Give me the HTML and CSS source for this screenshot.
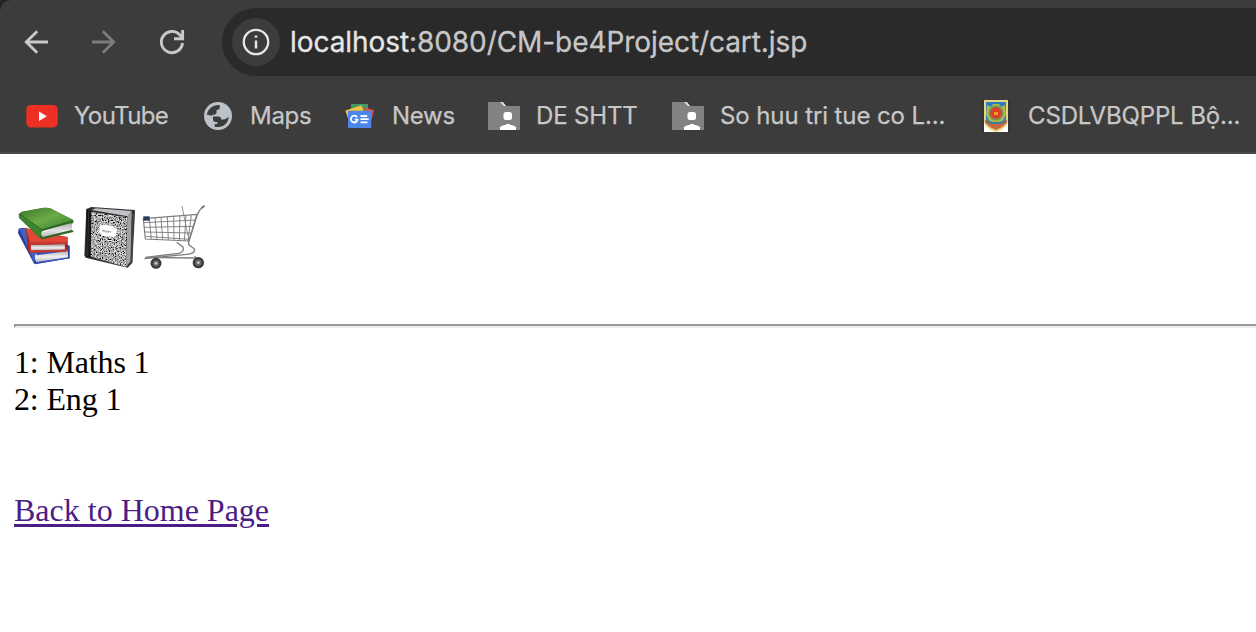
FILE: index.html
```html
<!DOCTYPE html>
<html lang="en">
<head>
<meta charset="utf-8">
<title>Cart</title>
<link rel="stylesheet" href="styles.css">
</head>
<body>
<header class="browser">
  <nav class="toolbar">
    <svg class="nav-icon" viewBox="0 0 28 28"><path d="M26 14H4M15.200 3.200L4.200 14l11 10.800" fill="none" stroke="#c9c9c9" stroke-width="2.800"/></svg>
    <svg class="nav-icon" viewBox="0 0 28 28"><path d="M2 14h22M12.800 3.200L23.800 14l-11 10.800" fill="none" stroke="#7c7c7c" stroke-width="2.800"/></svg>
    <svg class="nav-icon" viewBox="0 0 28 28"><path d="M24.500 15A10.600 10.600 0 1 1 21.800 6.900L24.600 9.800M24.600 2v8.800H16" fill="none" stroke="#c9c9c9" stroke-width="2.900"/></svg>
    <div class="address">
      <span class="site-info"><svg viewBox="0 0 28 28"><circle cx="14" cy="14" r="12.200" fill="none" stroke="#e6e6e6" stroke-width="2.300"/><path d="M14 12.600v8M14 7.400v2.400" stroke="#e6e6e6" stroke-width="2.500"/></svg></span>
      <span class="url"><b>localhost</b>:8080/CM-be4Project/cart.jsp</span>
    </div>
  </nav>
  <div class="bookmarks">
    <a class="bookmark"><svg viewBox="0 0 32 32"><rect x=".3" y="5" width="31.400" height="22.400" rx="4.500" fill="#ee3024"/><path d="M13 11.500v9.500l7.800-4.800z" fill="#fff"/></svg><span class="t-youtube">YouTube</span></a>
    <a class="bookmark"><svg viewBox="0 0 32 32"><circle cx="16" cy="16" r="14" fill="#bdc1c8"/><path d="M17.800 5v2.200c0 1.800-1.300 2.800-3.300 2.800v2.600c0 1.200-.9 2.200-2.500 2.200h-1.800v1.700h6.300c1.800 0 2.600 1.100 2.600 3h2.200c2.500 0 3.800-1.200 5.400-2.900.2 4.900-4 10.200-9.500 10.400h-4.700v-2.900h2.300V22h-3.300c-1.500 0-2.600-1.300-2.600-3.100L4.900 15C5.400 9.400 10.400 4.700 17.800 5z" fill="#3c3c3c"/><path d="M4.500 14.500l6.500 1.600v3.400c0 1.800 1.200 2.400 2.700 2.400h1.600v2H12.500V28C6 26 3 20 4.500 14.500z" fill="#bdc1c8"/></svg><span class="t-maps">Maps</span></a>
    <a class="bookmark"><svg viewBox="0 0 32 32"><path d="M7 4h17v12H7z" fill="#3f9b62"/><path d="M20 7l10 3.200L26 25z" fill="#df5145"/><path d="M1.300 10.500L17.500 5.200 22 18 6 24z" fill="#f5c244"/><rect x="4" y="10.800" width="23.200" height="17.200" rx="1" fill="#4d86ea"/><path d="M13 17.100a3.400 3.400 0 1 0 .6 2.600H10.800M16.500 16h6.700M16.500 19.200h8.200M16.500 22.400h7" fill="none" stroke="#fff" stroke-width="1.800"/></svg><span class="t-news">News</span></a>
    <a class="bookmark"><svg viewBox="0 0 32 32"><path d="M0 2h14l4 4h14v24H0z" fill="#828282"/><path d="M12 2h3l3 4h-2l-2-2z" fill="#e4e4e4"/><rect x="15.500" y="12" width="8.500" height="8" rx="2.500" fill="#fff"/><path d="M12 30v-3l4-2h2v-1h4v1h2l4 2v3z" fill="#fff"/></svg><span class="t-shtt">DE SHTT</span></a>
    <a class="bookmark"><svg viewBox="0 0 32 32"><path d="M0 2h14l4 4h14v24H0z" fill="#828282"/><path d="M12 2h3l3 4h-2l-2-2z" fill="#e4e4e4"/><rect x="15.500" y="12" width="8.500" height="8" rx="2.500" fill="#fff"/><path d="M12 30v-3l4-2h2v-1h4v1h2l4 2v3z" fill="#fff"/></svg><span class="t-sohuu">So huu tri tue co L...</span></a>
    <a class="bookmark"><svg viewBox="0 0 32 32"><path d="M2 0h2v32H2zM28 0h2v32h-2z" fill="#343434"/><path d="M4 0h24v32H4z" fill="#fff"/><path d="M4 0h24v22l-2 4-5 4-5 2-5-2-5-4-2-4z" fill="#e2d681"/><path d="M6 2h20v20l-5 5-5 2-5-2-5-5z" fill="#2c7bc0"/><path d="M7 5l4 2 2-3h6l2 3 4-2 1 9-3 7-7 2-7-2-3-7z" fill="#a8b950"/><circle cx="16" cy="13" r="7.500" fill="#77935a"/><circle cx="16" cy="13" r="5.800" fill="#dc3f25"/><path d="M14 12h4v3h-4z" fill="#f39b25"/><path d="M5 20l6 2h10l6-2v3l-5 4-6 3-6-3-5-4z" fill="#cc693c"/><path d="M7 21l4 2h10l4-2" fill="none" stroke="#397f9d" stroke-width="2"/></svg><span class="t-csdl">CSDLVBQPPL Bộ...</span></a>
  </div>
</header>
<main class="page">
  <div class="pictures">
    <svg viewBox="12 12 192 216">
      <defs><linearGradient id="green" x2="1" y2="1"><stop stop-color="#3c7829"/><stop offset=".5" stop-color="#6aab47"/><stop offset="1" stop-color="#39812c"/></linearGradient><linearGradient id="pages" x2="0" y2="1"><stop stop-color="#aaa9ac"/><stop offset=".55" stop-color="#f1eff0"/><stop offset="1" stop-color="#b5b3b8"/></linearGradient></defs>
      <path d="M26 98l12-3 141 54v38l-104 18-4-4-47-90z" fill="#293d91"/>
      <path d="M28 98l22-3 30 76-8 28z" fill="#3e63c5"/>
      <path d="M78 172l96-10v23l-93 14c-8-7-8-17-3-27z" fill="url(#pages)"/><path d="M77 170l102-12v6l-98 14M75 204l104-17v-4l-100 15z" fill="#3a56b8"/>
      <path d="M48 97l125 27v42l-112 4-8-7z" fill="#a72520"/><path d="M48 96l82 23 42 3v20l-112-1z" fill="#df4837"/>
      <path d="M63 147l101-2v16l-101 4z" fill="url(#pages)"/><path d="M57 138l115-1v7l-110 2v16l111-2v6l-114 4z" fill="#c63930"/><path d="M64 148l100-2v14l-100 3z" fill="url(#pages)"/>
      <path d="M26 55l9-8 67-12 17 1 71 36v8l-6 4v18l6 2v4l-94 22-8-6-61-58z" fill="#2c6823"/>
      <path d="M35 48l67-13 17 1 70 37-94 26-63-44z" fill="url(#green)"/><path d="M27 54l68 47-6 25-61-61z" fill="#3c842d"/>
      <path d="M97 105l87-24v21l-86 21c-6-5-6-12-1-18z" fill="url(#pages)"/><path d="M99 111l84-22M99 117l84-21" stroke="#bbb9bc" stroke-width="1.500"/>
    </svg>
    <svg viewBox="6 12 192 216">
      <defs><filter id="marble" x="0" y="0" width="1" height="1"><feTurbulence type="fractalNoise" baseFrequency=".28" numOctaves="2" seed="8"/><feColorMatrix values="2 0 0 0 -.6  2 0 0 0 -.6  2 0 0 0 -.6  0 0 0 0 1"/></filter><clipPath id="cover"><path d="M45 47l108 17-3 149-109-32z"/></clipPath></defs>
      <path d="M31 39l15-6 130 9 1 6-8 152-14 15-126-30-4-7z" fill="#303135"/>
      <path d="M47 42l12-5 108 8-12 16z" fill="#c3c3c5"/><path d="M154 62l13-17-2 150-15 18z" fill="#a2a3a7"/><path d="M171 52l-5 146" stroke="#424348" stroke-width="6"/>
      <g clip-path="url(#cover)"><rect x="35" y="38" width="130" height="178" filter="url(#marble)"/></g>
      <path d="M31 40l15 4-2 142-13-4z" fill="#141619"/><path d="M38 43l-3 138" stroke="#44464a" stroke-width="2"/>
      <path d="M72 91l6-5 34 4 5 6 6 4-2 18-7 5-34-3-5-7-6-5z" fill="#fff"/><text class="notes-label" x="77" y="108" transform="rotate(6 77 108)">Notes</text>
    </svg>
    <svg viewBox="18 12 192 216">
      <g fill="none" stroke="#7c7d80" stroke-width="3.500"><path d="M22 68l161-13-24 80-131-6z"/><path d="M23 80l156-8M24 94l149-3M26 108l142 3M28 121l133 9" stroke-width="2.800"/><path d="M40 67l6 63M57 65l6 65M75 64l5 67M94 62l3 70M113 61l1 72M132 59l-2 75M150 58l-5 76M166 57l-10 78" stroke-width="2.800"/><path d="M138 30l18 90" stroke-width="2.500"/><path d="M205 31c-10 4-17 14-22 27l-25 80c-4 14 16 14 18 23 0 8-12 13-24 14L25 188M122 139l18 13c5 10 0 18-13 20L28 184M28 184l148 2M59 184v6M176 180l9 14" stroke-width="4"/></g>
      <path d="M22 61h19v13H22z" fill="#263e58"/><path d="M206 29l-10 7" stroke="#777" stroke-width="5"/>
      <g fill="#6b6463" stroke="#38383b" stroke-width="7"><circle cx="60" cy="202" r="13"/><circle cx="187" cy="200" r="13.500"/></g><g fill="#d0cccb"><circle cx="60" cy="202" r="4"/><circle cx="187" cy="200" r="4"/></g>
    </svg>
  </div>
  <hr class="rule">
  <div class="cart"><div>1: Maths 1</div><div>2: Eng 1</div></div>
  <a class="home" href="#">Back to Home Page</a>
</main>
</body>
</html>
```
FILE: styles.css
```css
* { box-sizing: border-box; }
body { margin: 0; width: 1256px; height: 632px; overflow: hidden; background: #fff; }
svg { display: block; flex: none; }
.browser { height: 154px; padding-top: 8px; border-bottom: 2px solid #484848; background: radial-gradient(circle at 10px 10px, #3c3c3c 9px, #242424 10px) 0 0 / 10px 10px no-repeat, #3c3c3c; font-family: Inter, sans-serif; overflow: hidden; }
.toolbar { display: flex; align-items: center; height: 68px; padding-left: 22px; gap: 40px; }
.nav-icon { width: 28px; height: 28px; }
.address { flex: 1; display: flex; align-items: center; height: 68px; margin-left: -4px; padding-left: 10px; gap: 10px; border-radius: 34px 0 0 34px; background: #2a2a2a; }
.site-info { display: flex; align-items: center; justify-content: center; width: 48px; height: 48px; border-radius: 50%; background: #3c3c3c; }
.site-info svg { width: 28px; height: 28px; }
.url { color: #c7c7c7; font-size: 28px; line-height: 34px; white-space: nowrap; letter-spacing: -.07px; -webkit-text-stroke: .3px; }
.url b { color: #e6e6e6; font-weight: 400; }
.bookmarks { display: grid; grid-template-columns: 176px 142px 144px 184px 308px 276px; align-items: center; height: 76px; padding: 4px 0 0 26px; }
.bookmark { display: flex; align-items: center; gap: 16px; color: #c7c7c7; font-size: 24px; line-height: 30px; white-space: nowrap; -webkit-text-stroke: .25px; }
.bookmark svg { width: 32px; height: 32px; }
.t-youtube { letter-spacing: -.6px; }
.t-maps, .t-news { letter-spacing: -.3px; }
.t-shtt { letter-spacing: -.15px; }
.t-sohuu { letter-spacing: -.1px; }
.t-csdl { letter-spacing: -.15px; }
.page { padding: 46px 0 0 14px; font: 32px/37px "Liberation Serif", serif; color: #000; }
.pictures { display: flex; height: 72px; }
.pictures svg { width: 64px; height: 72px; }
.notes-label { font: 12px "Liberation Serif", serif; fill: #333; }
.rule { height: 4px; margin: 52px 0 16px; border: solid; border-width: 2px 0 2px 2px; border-color: #999 #eee #eee #999; }
.cart { letter-spacing: -.15px; }
.home { display: inline-block; margin-top: 74px; color: #4b1d86; text-decoration-thickness: 3px; text-underline-offset: 3px; }
```
